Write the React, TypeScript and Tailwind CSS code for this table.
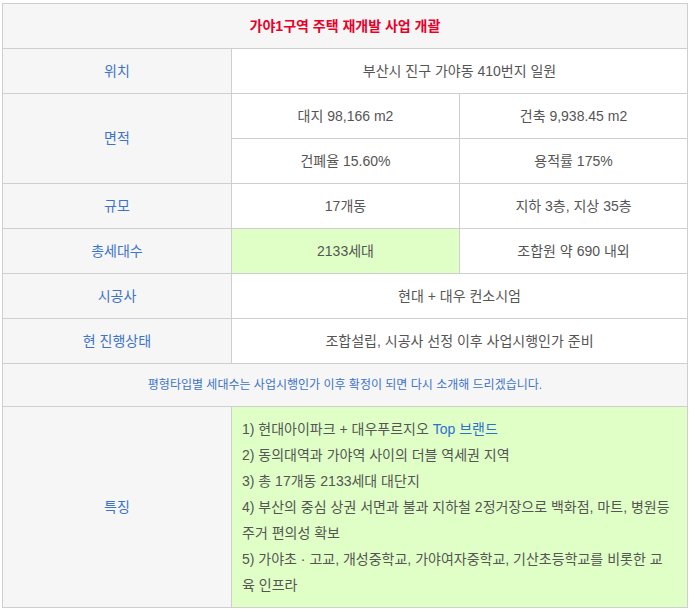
import React from "react";

const cellBase = "border-r border-b border-[#cfcfcf] flex items-center justify-center";
const label = `${cellBase} bg-[#f6f6f6] text-[#3d74c9]`;
const val = `${cellBase} bg-white text-[#555555]`;
const green = `${cellBase} bg-[#dfffc6] text-[#555555]`;

export default function App() {
  return (
    <div
      className="min-h-screen bg-white pt-[3px] pl-[2px] text-[14px]"
      style={{ fontFamily: '"Liberation Sans", "Noto Sans CJK KR", sans-serif' }}
    >
      <div className="grid w-[686px] grid-cols-[229px_228px_228px] grid-rows-[45px_45px_45px_45px_45px_45px_45px_45px_43px_201px] border-l border-t border-[#cfcfcf]">
        <div className={`${cellBase} col-span-3 bg-[#f6f6f6] font-bold text-[#e8002b]`}>
          가야1구역 주택 재개발 사업 개괄
        </div>

        <div className={label}>위치</div>
        <div className={`${val} col-span-2`}>부산시 진구 가야동 410번지 일원</div>

        <div className={`${label} row-span-2`}>면적</div>
        <div className={val}>대지 98,166 m2</div>
        <div className={val}>건축 9,938.45 m2</div>
        <div className={val}>건폐율 15.60%</div>
        <div className={val}>용적률 175%</div>

        <div className={label}>규모</div>
        <div className={val}>17개동</div>
        <div className={val}>지하 3층, 지상 35층</div>

        <div className={label}>총세대수</div>
        <div className={green}>2133세대</div>
        <div className={val}>조합원 약 690 내외</div>

        <div className={label}>시공사</div>
        <div className={`${val} col-span-2`}>현대 + 대우 컨소시엄</div>

        <div className={label}>현 진행상태</div>
        <div className={`${val} col-span-2`}>조합설립, 시공사 선정 이후 사업시행인가 준비</div>

        <div className={`${cellBase} col-span-3 bg-[#f6f6f6] text-[12px] text-[#3d74c9]`}>
          평형타입별 세대수는 사업시행인가 이후 확정이 되면 다시 소개해 드리겠습니다.
        </div>

        <div className={label}>특징</div>
        <div className="col-span-2 border-r border-b border-[#cfcfcf] bg-[#dfffc6] pl-[10px] pr-[4px] pt-[9px] pb-[9px] text-[#555555] leading-[26px] whitespace-nowrap">
          <div>
            1) 현대아이파크 + 대우푸르지오 <span className="text-[#2f6fd3]">Top 브랜드</span>
          </div>
          <div>2) 동의대역과 가야역 사이의 더블 역세권 지역</div>
          <div>3) 총 17개동 2133세대 대단지</div>
          <div>4) 부산의 중심 상권 서면과 불과 지하철 2정거장으로 백화점, 마트, 병원등</div>
          <div>주거 편의성 확보</div>
          <div>5) 가야초 · 고교, 개성중학교, 가야여자중학교, 기산초등학교를 비롯한 교</div>
          <div>육 인프라</div>
        </div>
      </div>
    </div>
  );
}
